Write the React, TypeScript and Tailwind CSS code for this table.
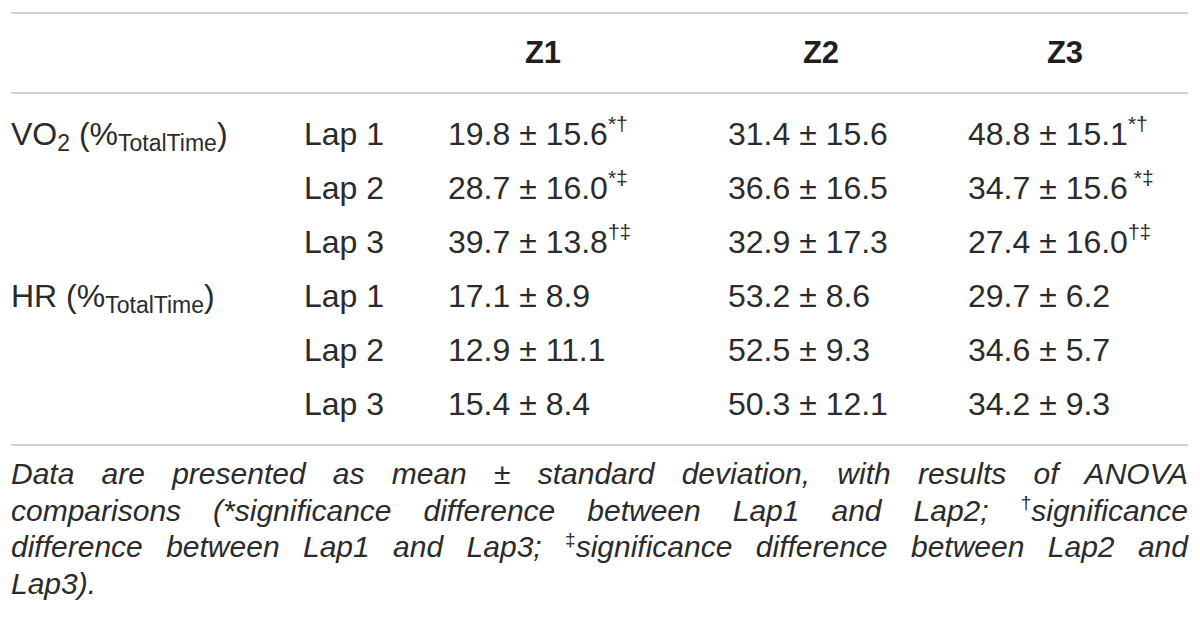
import React from 'react';

type Row = {
  label?: React.ReactNode;
  lap: string;
  values: { v: string; sup?: string }[];
};

const Metric = ({ name }: { name: React.ReactNode }) => (
  <span>
    {name} (%<sub className="text-[23px]">TotalTime</sub>)
  </span>
);

const rows: Row[] = [
  {
    label: <Metric name={<>VO<sub className="text-[23px]">2</sub></>} />,
    lap: 'Lap 1',
    values: [{ v: '19.8 ± 15.6', sup: '*†' }, { v: '31.4 ± 15.6' }, { v: '48.8 ± 15.1', sup: '*†' }],
  },
  {
    lap: 'Lap 2',
    values: [{ v: '28.7 ± 16.0', sup: '*‡' }, { v: '36.6 ± 16.5' }, { v: '34.7 ± 15.6', sup: ' *‡' }],
  },
  {
    lap: 'Lap 3',
    values: [{ v: '39.7 ± 13.8', sup: '†‡' }, { v: '32.9 ± 17.3' }, { v: '27.4 ± 16.0', sup: '†‡' }],
  },
  {
    label: <Metric name="HR" />,
    lap: 'Lap 1',
    values: [{ v: '17.1 ± 8.9' }, { v: '53.2 ± 8.6' }, { v: '29.7 ± 6.2' }],
  },
  {
    lap: 'Lap 2',
    values: [{ v: '12.9 ± 11.1' }, { v: '52.5 ± 9.3' }, { v: '34.6 ± 5.7' }],
  },
  {
    lap: 'Lap 3',
    values: [{ v: '15.4 ± 8.4' }, { v: '50.3 ± 12.1' }, { v: '34.2 ± 9.3' }],
  },
];

const gridCols = 'grid grid-cols-[293px_144px_280px_240px_1fr]';

const Rule = () => <div className="h-[2px] bg-[#d2d2d2]" />;

// footnote mark glued to the following word, so justify can't stretch it apart
const Mark = ({ sign, word }: { sign: string; word: string }) => (
  <span className="inline-block">
    <sup className="text-[19px] -top-[0.6em] not-italic">{sign}</sup>
    {word}
  </span>
);

export default function App() {
  return (
    <div className="w-[1200px] h-[635px] bg-white pt-[12px] pl-[11px] pr-[12px] text-[#2b2b2b] font-['Liberation_Sans',Arial,sans-serif]">
      <Rule />
      <div className={`${gridCols} h-[78px] items-center text-[31px] font-bold text-[#1f1f1f]`}>
        <div />
        <div />
        <div className="w-[190px] text-center">Z1</div>
        <div className="w-[186px] text-center">Z2</div>
        <div className="w-[194px] text-center">Z3</div>
      </div>
      <Rule />

      <div className="pt-[13px] pb-[13px] text-[32px]">
        {rows.map((row, i) => (
          <div key={i} className={`${gridCols} h-[54px] items-center leading-[54px] whitespace-nowrap`}>
            <div>{row.label}</div>
            <div>{row.lap}</div>
            {row.values.map((cell, j) => (
              <div key={j}>
                {cell.v}
                {cell.sup && <sup className="text-[21px] -top-[0.65em] whitespace-pre">{cell.sup}</sup>}
              </div>
            ))}
          </div>
        ))}
      </div>
      <Rule />

      <div className="pt-[10px] text-[30px] italic leading-[36.5px]">
        <div className="text-justify [text-align-last:justify]">
          Data are presented as mean ± standard deviation, with results of ANOVA
        </div>
        <div className="text-justify [text-align-last:justify]">
          comparisons (*significance difference between Lap1 and Lap2; <Mark sign="†" word="significance" />
        </div>
        <div className="text-justify [text-align-last:justify]">
          difference between Lap1 and Lap3; <Mark sign="‡" word="significance" /> difference between Lap2 and
        </div>
        <div>Lap3).</div>
      </div>
    </div>
  );
}
